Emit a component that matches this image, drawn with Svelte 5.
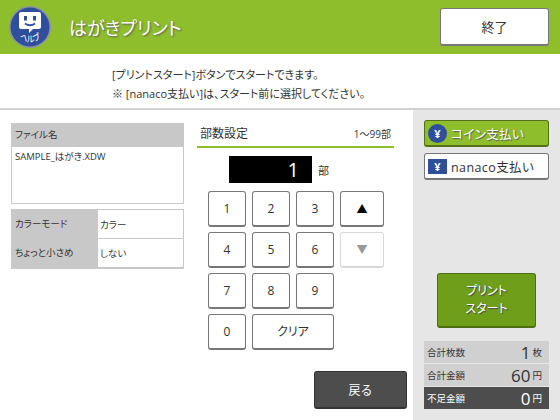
<script lang="ts">
	const keys = ['1', '2', '3', '▲', '4', '5', '6', '▼', '7', '8', '9'];
	const totals = [
		{ label: '合計枚数', value: '1', unit: '枚' },
		{ label: '合計金額', value: '60', unit: '円' },
		{ label: '不足金額', value: '0', unit: '円', dark: true }
	];
</script>

<div class="screen">
	<header class="topbar">
		<div class="help">
			<svg width="46" height="46" viewBox="0 0 46 46">
				<defs>
					<path id="help-arc" d="M6.5 25a16 16 0 0 0 31.5 0" />
				</defs>
				<circle cx="22" cy="23" r="21" fill="#8d93a3" />
				<circle cx="22" cy="23" r="19.5" fill="#2f4f9b" />
				<path d="M13 8h18a2 2 0 0 1 2 2v13a2 2 0 0 1-2 2h-6l-4 4v-4h-8a2 2 0 0 1-2-2V10a2 2 0 0 1 2-2z" fill="#fff" />
				<rect x="16" y="12" width="3" height="4.5" fill="#2f4f9b" />
				<rect x="25" y="12" width="3" height="4.5" fill="#2f4f9b" />
				<path d="M17 19.5q5 3.5 10 0" fill="none" stroke="#2f4f9b" stroke-width="2" />
				<text class="help-label"><textPath href="#help-arc" startOffset="50%" text-anchor="middle">ヘルプ</textPath></text>
			</svg>
		</div>
		<h1>はがきプリント</h1>
		<button class="btn end">終了</button>
	</header>

	<div class="notice">
		<p>[プリントスタート]ボタンでスタートできます。</p>
		<p>※ [nanaco支払い]は、スタート前に選択してください。</p>
	</div>

	<div class="body">
		<main class="content">
			<section class="info">
				<div class="file-box">
					<div class="file-head">ファイル名</div>
					<div class="file-name">SAMPLE_はがき.XDW</div>
				</div>
				<div class="props">
					<div class="prop"><span class="key">カラーモード</span><span class="val">カラー</span></div>
					<div class="prop"><span class="key">ちょっと小さめ</span><span class="val">しない</span></div>
				</div>
			</section>

			<section class="copies">
				<div class="copies-head">
					<h2>部数設定</h2>
					<span>1〜99部</span>
				</div>
				<div class="display-row">
					<div class="display">1</div>
					<span class="unit">部</span>
				</div>
				<div class="keypad">
					{#each keys as key}
						<button class="btn key" class:arrow={key === '▲' || key === '▼'} class:off={key === '▼'}>{key}</button>
					{/each}
					<button class="btn key zero">0</button>
					<button class="btn key clear">クリア</button>
				</div>
				<button class="back">戻る</button>
			</section>
		</main>

		<aside class="side">
			<button class="pay coin"><span class="yen round">¥</span>コイン支払い</button>
			<button class="pay nanaco"><span class="yen square">¥</span>nanaco支払い</button>
			<button class="start">プリント<br />スタート</button>
			<div class="totals">
				{#each totals as row}
					<div class="total" class:dark={row.dark}>
						<span class="total-label">{row.label}</span>
						<span class="total-value">{row.value}</span>
						<span class="total-unit">{row.unit}</span>
					</div>
				{/each}
			</div>
		</aside>
	</div>
</div>

<style>
	:global(body) {
		margin: 0;
	}

	.screen {
		width: 560px;
		height: 420px;
		display: flex;
		flex-direction: column;
		overflow: hidden;
		background: #fff;
		color: #333;
		font-family: "Open Sans", "Noto Sans CJK JP", sans-serif;
		font-feature-settings: "palt";
	}

	.topbar {
		height: 54px;
		flex: none;
		display: flex;
		align-items: center;
		padding: 0 11px 0 8px;
		box-sizing: border-box;
		background: #8fbe2d;
	}

	.help {
		width: 46px;
		height: 46px;
	}

	.help-label {
		font-size: 8.5px;
		fill: #fff;
	}

	h1 {
		margin: 0 0 0 15px;
		flex: 1;
		font-size: 18px;
		font-weight: 400;
		color: #fff;
		text-shadow: 1px 1px 2px #555;
	}

	.btn {
		padding: 0;
		background: #fff;
		border: 1px solid #777;
		border-bottom: 2px solid #777;
		border-radius: 3px;
		color: #333;
		font-family: inherit;
		font-feature-settings: inherit;
	}

	.end {
		width: 109px;
		height: 38px;
		font-size: 13px;
	}

	.notice {
		height: 56px;
		flex: none;
		box-sizing: border-box;
		padding: 11px 0 0 112px;
		border-bottom: 2px solid #d0d0d0;
		font-size: 11px;
		line-height: 19px;
	}

	.notice p {
		margin: 0;
	}

	.body {
		flex: 1;
		display: flex;
		min-height: 0;
	}

	.content {
		width: 413px;
		flex: none;
		display: flex;
	}

	.info {
		width: 173px;
		margin: 13px 0 0 11px;
		font-size: 9.5px;
	}

	.file-box {
		height: 81px;
		box-sizing: border-box;
		border: 1px solid #c8c8c8;
	}

	.file-head {
		height: 23px;
		line-height: 22px;
		padding-left: 3px;
		background: #c8c8c8;
	}

	.file-name {
		padding: 2px 3px;
		line-height: 16px;
	}

	.props {
		margin-top: 5px;
		border: 1px solid #c8c8c8;
		border-bottom-width: 2px;
	}

	.prop {
		height: 28px;
		display: flex;
		align-items: center;
	}

	.prop + .prop {
		border-top: 1px solid #c8c8c8;
	}

	.prop .key {
		align-self: stretch;
		width: 86px;
		box-sizing: border-box;
		padding-left: 3px;
		line-height: 28px;
		background: #c8c8c8;
	}

	.val {
		padding-left: 2px;
	}

	.copies {
		width: 197px;
		margin: 10px 0 0 13px;
		display: flex;
		flex-direction: column;
	}

	.copies-head {
		height: 26px;
		display: flex;
		align-items: center;
		justify-content: space-between;
		padding: 0 3px;
		border-bottom: 2px solid #8fbe2d;
		font-size: 10px;
	}

	h2 {
		margin: 0;
		font-size: 12px;
		font-weight: 400;
	}

	.display-row {
		margin: 8px 0 0 32px;
		display: flex;
		align-items: center;
		gap: 6px;
		font-size: 11px;
	}

	.display {
		width: 83px;
		height: 27px;
		box-sizing: border-box;
		padding-right: 13px;
		text-align: right;
		background: #000;
		color: #fff;
		font-size: 20px;
		line-height: 27px;
	}

	.keypad {
		margin: 8px 0 0 11px;
		display: grid;
		grid-template-columns: 38px 38px 38px 44px;
		grid-auto-rows: 36px;
		column-gap: 6px;
		row-gap: 5px;
	}

	.btn.key {
		font-size: 12px;
		line-height: 1;
	}

	.btn.arrow {
		font-size: 11px;
		color: #000;
	}

	.btn.off {
		border-color: #d8d8d8;
		color: #999;
	}

	.zero {
		grid-column: 1;
	}

	.clear {
		grid-column: 2 / span 2;
	}

	.back {
		width: 93px;
		height: 38px;
		margin: 21px 0 0 117px;
		padding: 0;
		flex: none;
		background: #4d4d4d;
		border: 1px solid #333;
		border-bottom: 2px solid #333;
		border-radius: 3px;
		color: #fff;
		font-family: inherit;
		font-size: 12px;
	}

	.side {
		flex: 1;
		display: flex;
		flex-direction: column;
		align-items: center;
		padding-top: 10px;
		background: #e6e6e6;
	}

	.pay {
		width: 125px;
		height: 27px;
		flex: none;
		display: flex;
		align-items: center;
		gap: 4px;
		box-sizing: border-box;
		padding: 0 0 0 3px;
		border-radius: 3px;
		font-family: inherit;
		font-feature-settings: inherit;
		font-size: 12.5px;
		letter-spacing: 0.4px;
	}

	.coin {
		background: #8fbe2d;
		border: 1px solid #55701b;
		border-bottom: 2px solid #55701b;
		color: #fff;
		text-shadow: 1px 1px 1px #555;
	}

	.nanaco {
		margin-top: 6px;
		background: #fff;
		border: 1px solid #777;
		border-bottom: 2px solid #777;
		color: #333;
	}

	.yen {
		width: 19px;
		height: 19px;
		flex: none;
		display: flex;
		align-items: center;
		justify-content: center;
		background: #2f4f9b;
		color: #fff;
		font-size: 11px;
		font-weight: 700;
		text-shadow: none;
	}

	.yen.round {
		border-radius: 50%;
	}

	.yen.square {
		height: 15px;
	}

	.start {
		width: 99px;
		height: 55px;
		flex: none;
		margin-top: 93px;
		padding: 0;
		background: #6f9e1a;
		border: 1px solid #4d6e12;
		border-bottom: 2px solid #4d6e12;
		border-radius: 3px;
		color: #fff;
		font-family: inherit;
		font-feature-settings: inherit;
		font-size: 12px;
		line-height: 18px;
		text-shadow: 1px 1px 1px #444;
	}

	.totals {
		width: 125px;
		margin-top: 13px;
		display: flex;
		flex-direction: column;
		gap: 1px;
	}

	.total {
		height: 22px;
		display: flex;
		align-items: center;
		padding: 0 7px 0 3px;
		background: #d0d0d0;
		font-size: 9.5px;
	}

	.total.dark {
		background: #4d4d4d;
		color: #fff;
	}

	.total-label {
		flex: 1;
	}

	.total-value {
		font-size: 17px;
		margin-right: 2px;
	}
</style>
